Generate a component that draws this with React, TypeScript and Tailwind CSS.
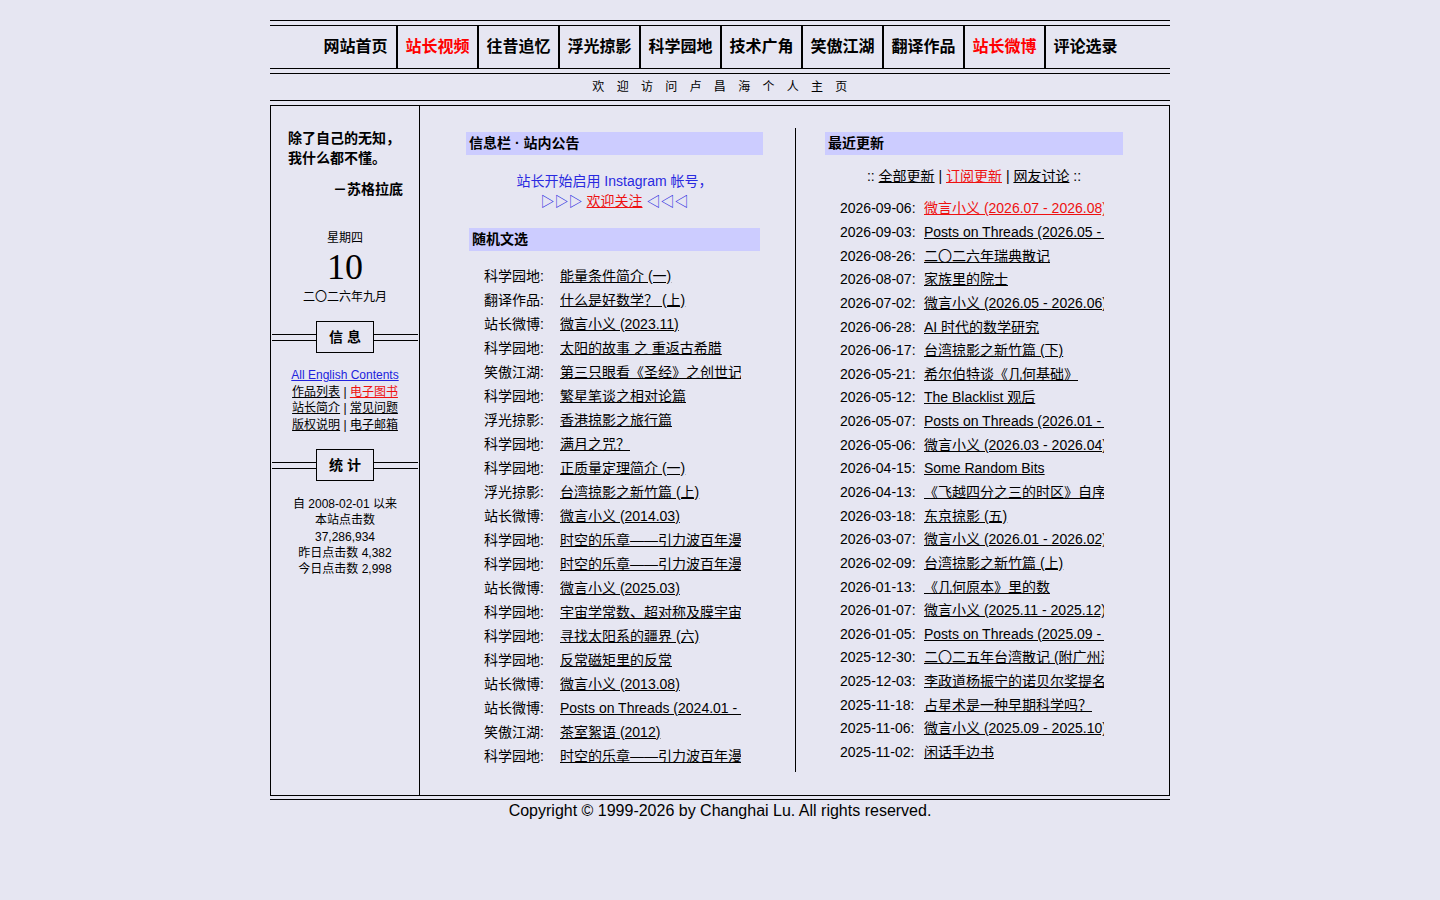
const navItems = [
  { label: "网站首页" },
  { label: "站长视频", hot: true },
  { label: "往昔追忆" },
  { label: "浮光掠影" },
  { label: "科学园地" },
  { label: "技术广角" },
  { label: "笑傲江湖" },
  { label: "翻译作品" },
  { label: "站长微博", hot: true },
  { label: "评论选录" },
];

const randomPicks = [
  ["科学园地", "能量条件简介 (一)"],
  ["翻译作品", "什么是好数学？ (上)"],
  ["站长微博", "微言小义 (2023.11)"],
  ["科学园地", "太阳的故事 之 重返古希腊"],
  ["笑傲江湖", "第三只眼看《圣经》之创世记"],
  ["科学园地", "繁星笔谈之相对论篇"],
  ["浮光掠影", "香港掠影之旅行篇"],
  ["科学园地", "满月之咒？"],
  ["科学园地", "正质量定理简介 (一)"],
  ["浮光掠影", "台湾掠影之新竹篇 (上)"],
  ["站长微博", "微言小义 (2014.03)"],
  ["科学园地", "时空的乐章——引力波百年漫谈"],
  ["科学园地", "时空的乐章——引力波百年漫谈"],
  ["站长微博", "微言小义 (2025.03)"],
  ["科学园地", "宇宙学常数、超对称及膜宇宙论"],
  ["科学园地", "寻找太阳系的疆界 (六)"],
  ["科学园地", "反常磁矩里的反常"],
  ["站长微博", "微言小义 (2013.08)"],
  ["站长微博", "Posts on Threads (2024.01 - 2024.06)"],
  ["笑傲江湖", "茶室絮语 (2012)"],
  ["科学园地", "时空的乐章——引力波百年漫谈"],
];

const updates: [string, string, boolean?][] = [
  ["2026-09-06", "微言小义 (2026.07 - 2026.08)", true],
  ["2026-09-03", "Posts on Threads (2026.05 - 2026.08)"],
  ["2026-08-26", "二〇二六年瑞典散记"],
  ["2026-08-07", "家族里的院士"],
  ["2026-07-02", "微言小义 (2026.05 - 2026.06)"],
  ["2026-06-28", "AI 时代的数学研究"],
  ["2026-06-17", "台湾掠影之新竹篇 (下)"],
  ["2026-05-21", "希尔伯特谈《几何基础》"],
  ["2026-05-12", "The Blacklist 观后"],
  ["2026-05-07", "Posts on Threads (2026.01 - 2026.04)"],
  ["2026-05-06", "微言小义 (2026.03 - 2026.04)"],
  ["2026-04-15", "Some Random Bits"],
  ["2026-04-13", "《飞越四分之三的时区》自序"],
  ["2026-03-18", "东京掠影 (五)"],
  ["2026-03-07", "微言小义 (2026.01 - 2026.02)"],
  ["2026-02-09", "台湾掠影之新竹篇 (上)"],
  ["2026-01-13", "《几何原本》里的数"],
  ["2026-01-07", "微言小义 (2025.11 - 2025.12)"],
  ["2026-01-05", "Posts on Threads (2025.09 - 2025.12)"],
  ["2025-12-30", "二〇二五年台湾散记 (附广州游)"],
  ["2025-12-03", "李政道杨振宁的诺贝尔奖提名"],
  ["2025-11-18", "占星术是一种早期科学吗？"],
  ["2025-11-06", "微言小义 (2025.09 - 2025.10)"],
  ["2025-11-02", "闲话手边书"],
];

// boxed label with double rules running out to both sides
const SideHeading = ({ text }: { text: string }) => (
  <div className="flex items-center mx-[1px]">
    <div className="flex-1 h-[7px] border-y border-black" />
    <div className="w-[58px] h-[32px] border border-black flex items-center justify-center text-[14px] font-bold tracking-[4px] pl-[4px]">
      {text}
    </div>
    <div className="flex-1 h-[7px] border-y border-black" />
  </div>
);

const Bar = ({ children, className }: { children: React.ReactNode; className: string }) => (
  <div className={`h-[23px] bg-[#ccccff] px-[3px] flex items-center text-[14px] font-bold ${className}`}>
    {children}
  </div>
);

export default function App() {
  return (
    <div className="min-h-screen bg-[#e6e6f2] text-black font-['Liberation_Sans','Noto_Sans_CJK_SC',sans-serif]">
      <div className="w-[900px] mx-auto pt-[20px]">
        <div className="border-t border-black" />

        <nav className="mt-[4px] h-[44px] border-y border-black flex justify-center">
          {navItems.map((item, i) => (
            <a
              key={item.label}
              href="#"
              className={`w-[81px] flex items-center justify-center text-[16px] font-bold ${
                i > 0 ? "border-l-2 border-black" : ""
              } ${item.hot ? "text-[#ff0000]" : ""}`}
            >
              {item.label}
            </a>
          ))}
        </nav>

        <div className="mt-[4px] border-t border-black" />
        <div className="h-[26px] flex items-center justify-center text-[12px] tracking-[12.3px] -mr-[12px]">
          欢迎访问卢昌海个人主页
        </div>
        <div className="border-t border-black" />

        <div className="mt-[4px] h-[691px] border border-black flex">
          {/* left sidebar */}
          <aside className="w-[149px] border-r border-black pt-[22px]">
            <div className="pl-[17px] pr-[16px] text-[14px] font-bold leading-[20px]">
              <p>除了自己的无知，</p>
              <p>我什么都不懂。</p>
              <p className="mt-[11px] text-right">－苏格拉底</p>
            </div>

            <div className="mt-[31px] text-center">
              <p className="text-[12px] leading-[16px]">星期四</p>
              <p className="text-[36px] leading-[43px] font-['Liberation_Serif',serif]">10</p>
              <p className="text-[12px] leading-[16px]">二〇二六年九月</p>
            </div>

            <div className="mt-[16px]">
              <SideHeading text="信息" />
            </div>

            <div className="mt-[14px] text-center text-[12px] leading-[16.5px]">
              <a href="#" className="underline text-[#2222dd]">All English Contents</a>
              <p>
                <a href="#" className="underline">作品列表</a> | <a href="#" className="underline text-[#ee1111]">电子图书</a>
              </p>
              <p>
                <a href="#" className="underline">站长简介</a> | <a href="#" className="underline">常见问题</a>
              </p>
              <p>
                <a href="#" className="underline">版权说明</a> | <a href="#" className="underline">电子邮箱</a>
              </p>
            </div>

            <div className="mt-[16px]">
              <SideHeading text="统计" />
            </div>

            <div className="mt-[15px] text-center text-[12px] leading-[16.3px]">
              <p>自 2008-02-01 以来</p>
              <p>本站点击数</p>
              <p>37,286,934</p>
              <p>昨日点击数 4,382</p>
              <p>今日点击数 2,998</p>
            </div>
          </aside>

          {/* notices and random picks */}
          <section className="w-[375px] pt-[26px]">
            <Bar className="ml-[46px] w-[297px]">信息栏 · 站内公告</Bar>
            <div className="ml-[46px] w-[297px] mt-[16px] text-center text-[14px] leading-[20px] text-[#2a2ae0]">
              <p>站长开始启用 Instagram 帐号，</p>
              <p>
                ▷▷▷ <a href="#" className="underline text-[#ee1111]">欢迎关注</a> ◁◁◁
              </p>
            </div>

            <Bar className="mt-[17px] ml-[49px] w-[291px]">随机文选</Bar>
            <ul className="mt-[13px] ml-[64px] text-[14px]">
              {randomPicks.map(([cat, title], i) => (
                <li key={i} className="h-[24px] flex items-center">
                  <span className="w-[76px] shrink-0">{cat}:</span>
                  <a href="#" className="w-[181px] overflow-hidden whitespace-nowrap underline">
                    {title}
                  </a>
                </li>
              ))}
            </ul>
          </section>

          <div className="w-px bg-black mt-[22px] mb-[23px]" />

          {/* latest updates */}
          <section className="flex-1 pt-[26px]">
            <Bar className="ml-[29px] w-[298px]">最近更新</Bar>
            <p className="ml-[29px] w-[298px] mt-[11px] text-center text-[14px] leading-[20px]">
              :: <a href="#" className="underline">全部更新</a> | <a href="#" className="underline text-[#ee1111]">订阅更新</a> |{" "}
              <a href="#" className="underline">网友讨论</a> ::
            </p>
            <ul className="mt-[11px] ml-[44px] text-[14px]">
              {updates.map(([date, title, hot]) => (
                <li key={date + title} className="h-[23.65px] flex items-center">
                  <span className="w-[84px] shrink-0">{date}:</span>
                  <a
                    href="#"
                    className={`w-[180px] overflow-hidden whitespace-nowrap underline ${hot ? "text-[#ee1111]" : ""}`}
                  >
                    {title}
                  </a>
                </li>
              ))}
            </ul>
          </section>
        </div>

        <div className="mt-[3px] border-t border-black" />
        <p className="mt-[1px] text-center text-[16px] leading-[19px]">
          Copyright © 1999-2026 by Changhai Lu. All rights reserved.
        </p>
      </div>
    </div>
  );
}
